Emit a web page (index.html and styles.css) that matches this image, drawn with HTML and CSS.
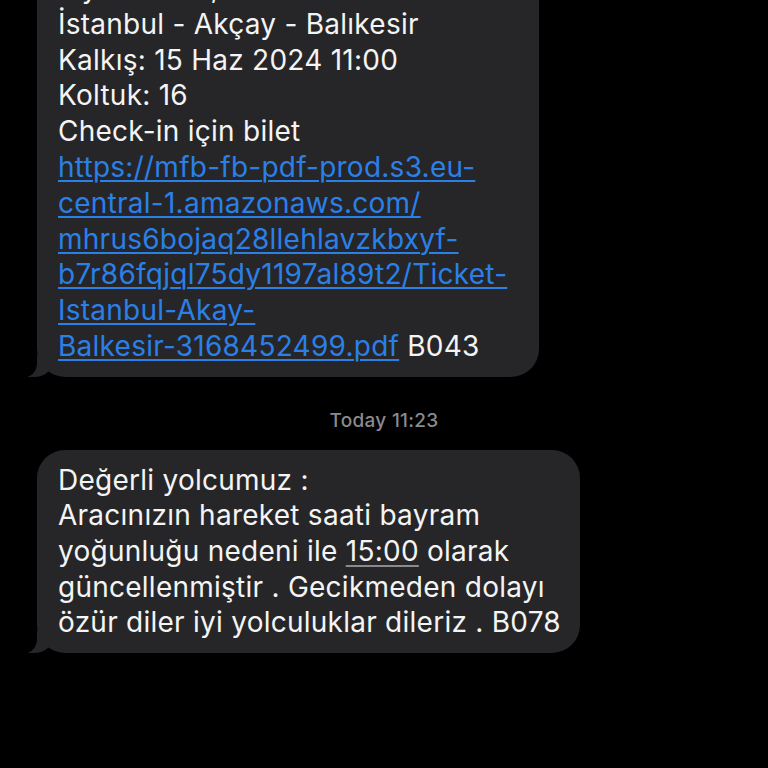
FILE: index.html
```html
<!DOCTYPE html>
<html lang="tr">
<head>
<meta charset="utf-8">
<link rel="stylesheet" href="styles.css">
</head>
<body>
<main class="thread">
  <div class="bubble bubble-ticket">
    Fiyat: 1.025,00<br>
    İstanbul - Akçay - Balıkesir<br>
    Kalkış: 15 Haz 2024 11:00<br>
    Koltuk: 16<br>
    Check-in için bilet<br>
    <a class="link" href="#">https://mfb-fb-pdf-prod.s3.eu-<br>central-1.amazonaws.com/<br>mhrus6bojaq28llehlavzkbxyf-<br>b7r86fqjql75dy1197al89t2/Ticket-<br>Istanbul-Akay-<br>Balkesir-3168452499.pdf</a> B043
  </div>
  <div class="stamp">Today 11:23</div>
  <div class="bubble bubble-notice">
    Değerli yolcumuz :<br>
    Aracınızın hareket saati bayram<br>
    yoğunluğu nedeni ile <span class="time">15:00</span> olarak<br>
    güncellenmiştir . Gecikmeden dolayı<br>
    özür diler iyi yolculuklar dileriz . B078
  </div>
</main>
</body>
</html>
```

FILE: styles.css
```css
html, body {
  margin: 0;
  padding: 0;
  background: #000;
}
body {
  width: 768px;
  height: 768px;
  overflow: hidden;
  font-family: "Inter", "Noto Sans", "Liberation Sans", sans-serif;
}
.thread {
  display: flex;
  flex-direction: column;
  align-items: flex-start;
  margin-top: -41px;
  padding-left: 37px;
}
.bubble {
  position: relative;
  box-sizing: border-box;
  background: #262628;
  color: #f4f4f4;
  font-size: 28px;
  line-height: 35.8px;
  letter-spacing: 0.25px;
  white-space: nowrap;
  border-radius: 28px;
  padding: 12px 20px 12px 21px;
}
.bubble::before {
  content: "";
  position: absolute;
  left: -9px;
  bottom: 0;
  width: 24px;
  height: 22px;
  background: #262628;
  border-bottom-right-radius: 18px 14px;
}
.bubble::after {
  content: "";
  position: absolute;
  left: -12px;
  bottom: 0;
  width: 12px;
  height: 22px;
  background: #000;
  border-bottom-right-radius: 12px 14px;
}
.bubble-ticket {
  width: 502px;
}
.bubble-notice {
  width: 543px;
  padding-top: 13px;
  line-height: 35.6px;
}
.link {
  color: #2b80e8;
  text-decoration: underline;
  text-decoration-thickness: 1.5px;
  text-underline-offset: 3px;
}
.time {
  text-decoration: underline;
  text-decoration-color: #8a8a8e;
  text-decoration-thickness: 1.5px;
  text-underline-offset: 4px;
}
.stamp {
  align-self: stretch;
  margin-left: -37px;
  margin-top: 33px;
  margin-bottom: 18px;
  text-align: center;
  color: #8a8a8e;
  font-size: 19px;
  font-weight: 500;
  line-height: 22px;
  letter-spacing: 0.3px;
}
```
